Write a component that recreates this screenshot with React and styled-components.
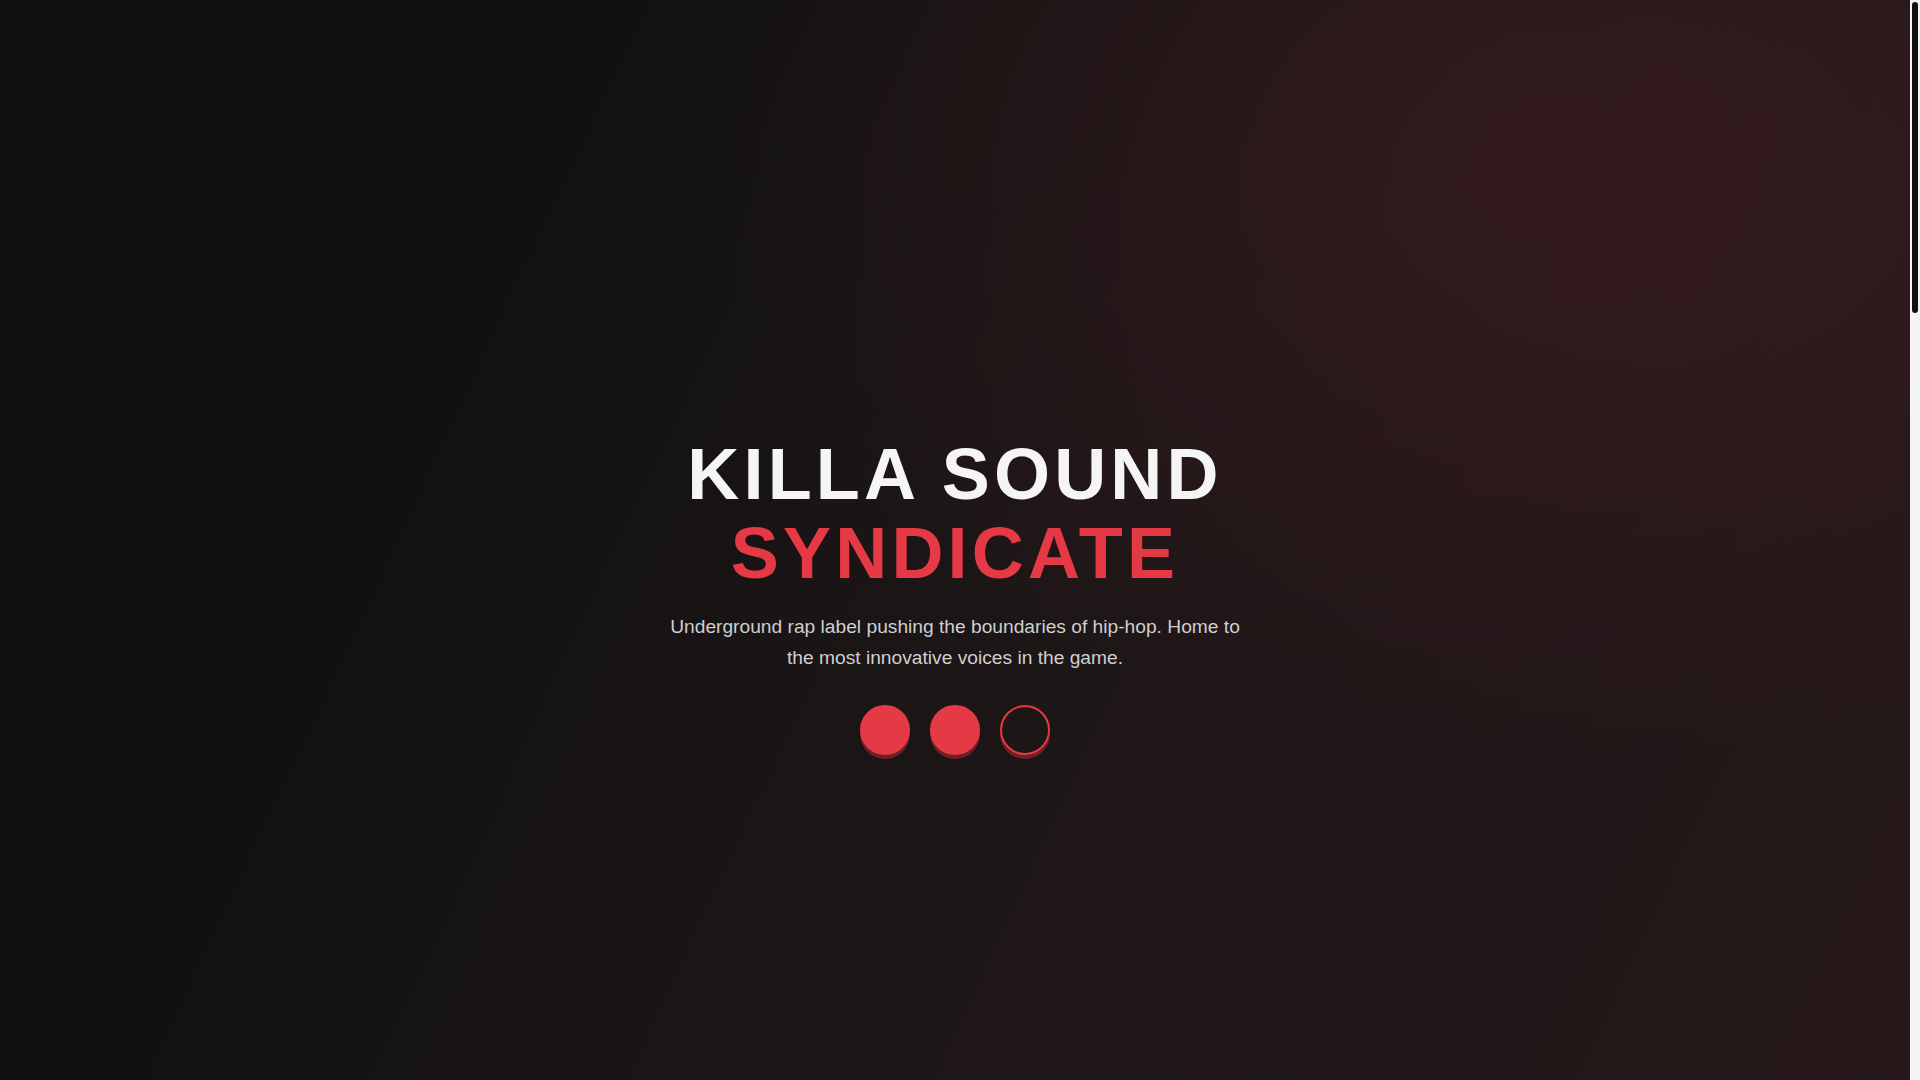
import React from 'react'
import styled, {createGlobalStyle} from 'styled-components'

const Global = createGlobalStyle`
  html, body {
    margin: 0;
    padding: 0;
    height: 100%;
    overflow: hidden;
    background: #111111;
    font-family: "Liberation Sans", Arial, sans-serif;
  }
`

const Shell = styled.div`
  display: flex;
  height: 100vh;
`

const Page = styled.div`
  flex: 1;
  height: 100vh;
  overflow-y: auto;
  scrollbar-width: none;
  display: flex;
  flex-direction: column;

  &::-webkit-scrollbar {
    display: none;
  }
`

// scroll indicator on the right edge
const Rail = styled.div`
  width: 10px;
  flex-shrink: 0;
  background: #f4f4f4;
  display: flex;
  justify-content: center;
  padding-top: 2px;
  box-sizing: border-box;
`

const Thumb = styled.div`
  width: 6px;
  height: 311px;
  border-radius: 3px;
  background: #111111;
`

const Hero = styled.section`
  flex-shrink: 0;
  min-height: 100vh;
  box-sizing: border-box;
  padding-top: 110px;
  display: flex;
  flex-direction: column;
  align-items: center;
  justify-content: center;
  text-align: center;
  background:
    radial-gradient(ellipse 45% 55% at 82% 16%, rgba(230, 57, 70, 0.1) 0%, rgba(230, 57, 70, 0) 100%),
    linear-gradient(115deg, #111111 22%, #1d1617 55%, #261819 100%);
`

const Title = styled.h1`
  margin: 0 0 19px;
  font-size: 72px;
  line-height: 1.1;
  font-weight: 700;
  letter-spacing: 4.2px;
  color: #f5f5f5;
  text-transform: uppercase;
`

const Accent = styled.span`
  display: block;
  color: #e63946;
`

const Tagline = styled.p`
  margin: 0 0 32px;
  max-width: 600px;
  font-size: 19.2px;
  line-height: 1.6;
  color: #cfcfcf;
`

const Dots = styled.div`
  display: flex;
  gap: 20px;
`

const Dot = styled.button`
  width: 50px;
  height: 50px;
  padding: 0;
  border-radius: 50%;
  box-sizing: border-box;
  cursor: pointer;
  border: 2px solid #e63946;
  background: ${p => (p.$hollow ? 'transparent' : '#e63946')};
  box-shadow: 0 4px 0 rgba(180, 40, 52, 0.55);
`

const Rest = styled.section`
  flex-shrink: 0;
  height: 2620px;
  background: #111111;
`

const App = () => {
  return (
    <Shell>
      <Global />
      <Page>
        <Hero>
          <Title>
            Killa Sound
            <Accent>Syndicate</Accent>
          </Title>
          <Tagline>
            Underground rap label pushing the boundaries of hip-hop. Home to the most innovative voices in the game.
          </Tagline>
          <Dots>
            <Dot aria-label="Listen" />
            <Dot aria-label="Artists" />
            <Dot aria-label="Contact" $hollow />
          </Dots>
        </Hero>
        <Rest />
      </Page>
      <Rail>
        <Thumb />
      </Rail>
    </Shell>
  )
}

export default App
